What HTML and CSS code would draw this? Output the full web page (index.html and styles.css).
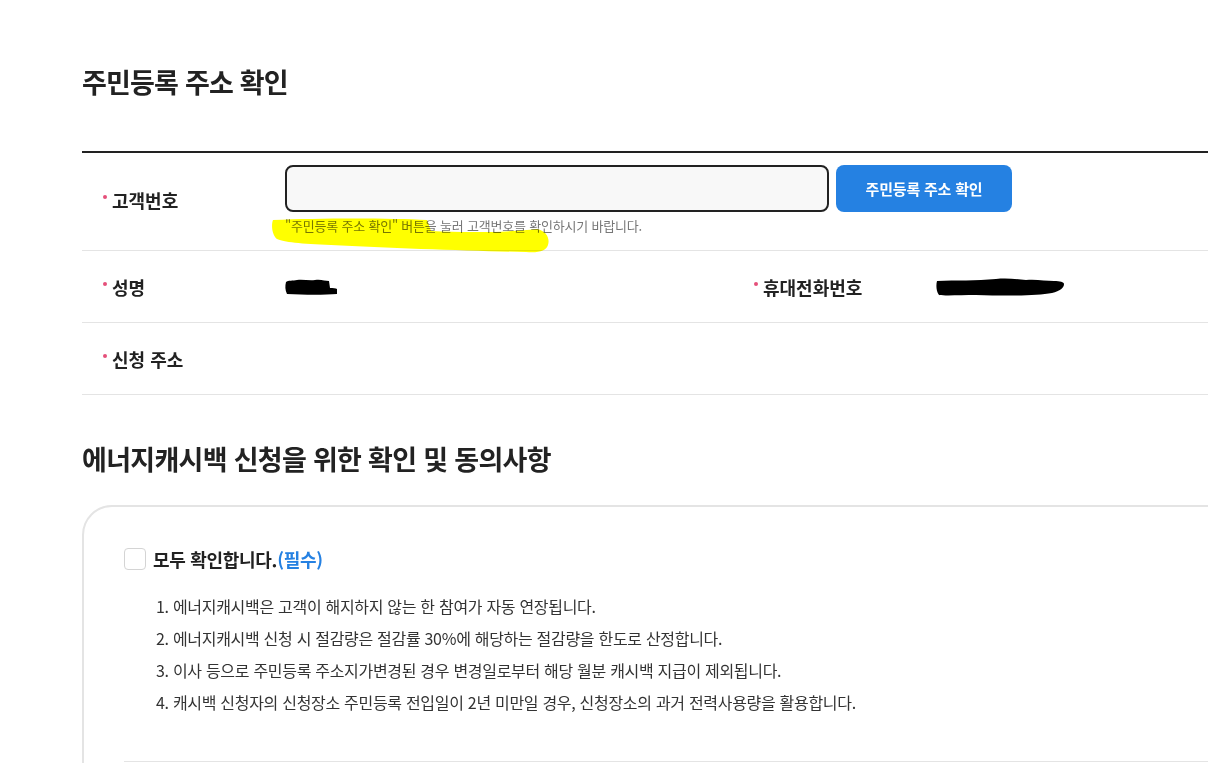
FILE: index.html
```html
<!DOCTYPE html>
<html lang="ko">
<head>
    <meta charset="utf-8">
    <title>주민등록 주소 확인</title>
    <link rel="stylesheet" href="styles.css">
</head>
<body>
    <div class="page">
        <h1 class="title">주민등록 주소 확인</h1>

        <div class="form-table">
            <div class="row row-first">
                <div class="label req">고객번호</div>
                <div class="field">
                    <div class="input-line">
                        <input class="text-input" type="text">
                        <button class="btn-blue">주민등록 주소 확인</button>
                    </div>
                    <p class="help">"주민등록 주소 확인" 버튼을 눌러 고객번호를 확인하시기 바랍니다.</p>
                    <!-- 형광펜 표시 -->
                    <svg class="marker" width="282" height="40" viewBox="0 0 282 40">
                        <path d="M2,3 C50,1 120,1 156,3 L160,14 C200,16 240,15 266,12 C276,14 279,22 277,28 C275,34 268,36 255,35 C200,34 120,31 60,28 C30,27 12,25 6,22 C1,18 0,8 2,3 Z" fill="#ffff00"/>
                    </svg>
                </div>
            </div>
            <div class="row row-half">
                <div class="label req">성명</div>
                <div class="value">
                    <svg width="54" height="18" viewBox="0 0 54 18">
                        <path d="M1,4 C3,2 8,3 12,2 C18,1 24,3 30,2 C36,1 40,3 44,3 L45,10 C48,10 51,10 52,11 L52,16 C40,17 20,17 2,16 C0,12 0,8 1,4 Z" fill="#000"/>
                    </svg>
                </div>
                <div class="label req">휴대전화번호</div>
                <div class="value">
                    <svg width="130" height="22" viewBox="0 0 130 22">
                        <path d="M1,5 C20,4 40,5 60,3 C70,2 80,3 90,4 C100,3 110,5 118,5 C124,5 128,6 128,8 C128,12 124,15 116,17 C100,20 70,20 40,19 C25,19 10,20 3,19 C0,15 0,9 1,5 Z" fill="#000"/>
                    </svg>
                </div>
            </div>
            <div class="row">
                <div class="label req">신청 주소</div>
                <div class="value"></div>
            </div>
        </div>

        <h2 class="sub-title">에너지캐시백 신청을 위한 확인 및 동의사항</h2>

        <div class="agree-box">
            <label class="check-all">
                <span class="checkbox"></span>
                <span>모두 확인합니다.<em>(필수)</em></span>
            </label>
            <ol class="agree-list">
                <li>1. 에너지캐시백은 고객이 해지하지 않는 한 참여가 자동 연장됩니다.</li>
                <li>2. 에너지캐시백 신청 시 절감량은 절감률 30%에 해당하는 절감량을 한도로 산정합니다.</li>
                <li>3. 이사 등으로 주민등록 주소지가변경된 경우 변경일로부터 해당 월분 캐시백 지급이 제외됩니다.</li>
                <li>4. 캐시백 신청자의 신청장소 주민등록 전입일이 2년 미만일 경우, 신청장소의 과거 전력사용량을 활용합니다.</li>
            </ol>
            <div class="divider"></div>
        </div>
    </div>
</body>
</html>
```

FILE: styles.css
```css
body {
    margin: 0;
    overflow: hidden;
    background: #fff;
    font-family: "Noto Sans CJK KR", "Noto Sans", sans-serif;
    color: #222;
}

.page {
    width: 1302px;
    padding-left: 82px;
}

.title {
    margin: 62px 0 49px;
    font-size: 27px;
    line-height: 40px;
    font-weight: 700;
    letter-spacing: -0.8px;
}

.form-table {
    border-top: 2px solid #222;
}

.row {
    display: grid;
    grid-template-columns: 203px 1fr;
    align-items: center;
    height: 71px;
    border-bottom: 1px solid #e4e4e4;
}

.row-first {
    height: 97px;
    align-items: start;
}

.row-half {
    grid-template-columns: 203px 448px 203px 1fr;
}

.label {
    padding-left: 21px;
    font-size: 18px;
    font-weight: 700;
    line-height: 24px;
}

.row-first .label {
    padding-top: 35px;
}

.req::before {
    content: "";
    display: inline-block;
    width: 4px;
    height: 4px;
    border-radius: 50%;
    background: #e5507a;
    margin-right: 5px;
    vertical-align: 9px;
}

.field {
    position: relative;
    padding-top: 12px;
}

.input-line {
    display: flex;
    gap: 7px;
}

.text-input {
    box-sizing: border-box;
    width: 544px;
    height: 47px;
    border: 2px solid #222;
    border-radius: 8px;
    background: #f8f8f8;
    outline: none;
}

.btn-blue {
    width: 176px;
    height: 47px;
    border: none;
    border-radius: 8px;
    background: #2581e2;
    color: #fff;
    font-family: inherit;
    font-size: 15px;
    font-weight: 700;
    letter-spacing: -0.2px;
}

.help {
    margin: 4px 0 0;
    font-size: 13px;
    line-height: 20px;
    color: #777;
    letter-spacing: -0.2px;
}

.marker {
    position: absolute;
    left: -14px;
    top: 64px;
    mix-blend-mode: multiply;
}

.value {
    display: flex;
    align-items: center;
}

.sub-title {
    margin: 44px 0 26px;
    font-size: 27px;
    line-height: 40px;
    font-weight: 700;
    letter-spacing: -0.7px;
}

.agree-box {
    border: 2px solid #e4e4e4;
    border-radius: 30px;
    padding: 41px 40px 0;
    height: 400px;
}

.check-all {
    display: flex;
    align-items: center;
    gap: 7px;
    font-size: 18px;
    font-weight: 700;
    letter-spacing: -0.3px;
    line-height: 22px;
}

.check-all em {
    font-style: normal;
    color: #2581e2;
}

.checkbox {
    box-sizing: border-box;
    width: 22px;
    height: 22px;
    border: 1px solid #d4d4d4;
    border-radius: 4px;
    background: #fff;
}

.agree-list {
    list-style: none;
    margin: 20px 0 0;
    padding-left: 32px;
}

.agree-list li {
    font-size: 16px;
    line-height: 32px;
    color: #333;
    letter-spacing: -0.3px;
}

.divider {
    margin-top: 43px;
    border-top: 1px solid #e4e4e4;
}
```
